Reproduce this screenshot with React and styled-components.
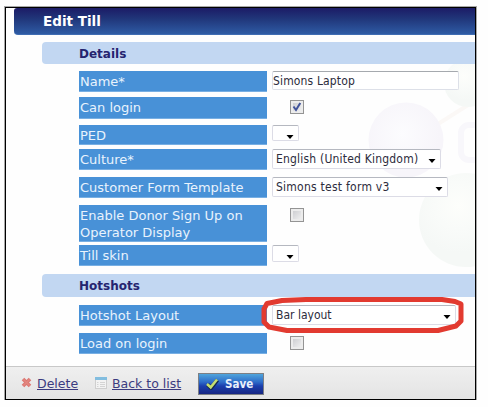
import styled, { createGlobalStyle } from "styled-components"

export default function App() {
  return (
    <>
      <GlobalStyle />
      <Window>
        <Molecules />
        <Title>Edit Till</Title>

        <Section $gap={7} $height={22}>Details</Section>
        <Fields>
          <Row $height={21} $gap={7}>
            <Label>Name*</Label>
            <TextInput defaultValue="Simons Laptop" />
          </Row>
          <Row $height={22} $gap={5}>
            <Label>Can login</Label>
            <Checkbox checked />
          </Row>
          <Row $height={20} $gap={6}>
            <Label>PED</Label>
            <Select $width={27} $height={16} $drop={7} />
          </Row>
          <Row $height={21} $gap={4}>
            <Label>Culture*</Label>
            <Select $width={169} $height={20} $spacing={0.2}>English (United Kingdom)</Select>
          </Row>
          <Row $height={21} $gap={7}>
            <Label>Customer Form Template</Label>
            <Select $width={176} $height={20} $spacing={0.25}>Simons test form v3</Select>
          </Row>
          <Row $height={37} $gap={7}>
            <Label>Enable Donor Sign Up on<br />Operator Display</Label>
            <Checkbox />
          </Row>
          <Row $height={21} $gap={3}>
            <Label>Till skin</Label>
            <Select $width={27} $height={17} $drop={6} />
          </Row>
        </Fields>

        <Section $gap={8} $height={23}>Hotshots</Section>
        <Fields>
          <Row $height={21} $gap={8}>
            <Label>Hotshot Layout</Label>
            <Select $width={184} $height={20}>Bar layout</Select>
            <Ring />
          </Row>
          <Row $height={21} $gap={7}>
            <Label>Load on login</Label>
            <Checkbox />
          </Row>
        </Fields>

        <Footer>
          <CrossIcon />
          <Link href="#" $width={42}>Delete</Link>
          <ListIcon />
          <Link href="#" $width={70}>Back to list</Link>
          <SaveButton>
            <TickIcon />
            Save
          </SaveButton>
        </Footer>
      </Window>
    </>
  )
}

function Select({ children, ...props }) {
  return (
    <SelectBox {...props}>
      <span>{children}</span>
      <svg width="8" height="4" viewBox="0 0 8 4">
        <path d="M0.500 0H7.500L4 4Z" fill="#000" />
      </svg>
    </SelectBox>
  )
}

function Checkbox({ checked }) {
  return (
    <CheckBox>
      {checked && (
        <svg width="10" height="10" viewBox="0 0 10 10">
          <path d="M1.5 4.5L4 8L8.3 1" fill="none" stroke="#42549b" strokeWidth="2" />
        </svg>
      )}
    </CheckBox>
  )
}

// faded molecule behind the form
function Molecules() {
  return (
    <Backdrop width="115" height="214" viewBox="360 58 115 214">
      <defs>
        <radialGradient id="violet" cx="45%" cy="42%">
          <stop offset="0" stopColor="#fcfcfe" />
          <stop offset="1" stopColor="#f7f5fa" />
        </radialGradient>
        <radialGradient id="green" cx="42%" cy="35%">
          <stop offset="0" stopColor="#fdfefb" />
          <stop offset="0.5" stopColor="#f9fbf9" />
          <stop offset="1" stopColor="#f5f8f6" />
        </radialGradient>
      </defs>
      <path d="M438 124L476 100" stroke="#fbf8f6" strokeWidth="4" />
      <circle cx="468" cy="83" r="24" fill="url(#green)" />
      <circle cx="406" cy="140" r="37.500" fill="url(#violet)" />
      <rect x="461" y="125" width="30" height="35" rx="8" fill="none" stroke="#f8f7fb" strokeWidth="6" />
      <circle cx="466" cy="220" r="47" fill="url(#green)" />
    </Backdrop>
  )
}

function Ring() {
  return (
    <RingSvg width="206" height="40" viewBox="260 295 206 40">
      <path
        d="M282 300.500L306 299.500H442L455 301.500L461 304V321L456 326L438 330.500H287L269 327L264 322V309L267 303.500Z"
        fill="none"
        stroke="#e23a30"
        strokeWidth="5"
        strokeLinejoin="round"
      />
    </RingSvg>
  )
}

function CrossIcon() {
  return (
    <svg width="11" height="11" viewBox="0 0 11 11">
      <path d="M2 2L9 9M9 2L2 9" stroke="#dc7670" strokeWidth="3.600" />
      <path d="M2.500 2.500L8.500 8.500M8.500 2.500L2.500 8.500" stroke="#e38780" strokeWidth="1.500" />
    </svg>
  )
}

function ListIcon() {
  return (
    <svg width="12" height="12" viewBox="0 0 12 12">
      <rect x="0.500" y="0.500" width="11" height="11" fill="#f3f3f3" stroke="#cfcfcf" />
      <rect width="12" height="3" fill="#82bddf" />
      <path d="M2 5.500H3.500M5 5.500H10M2 7.500H3.500M5 7.500H10M2 9.500H3.500M5 9.500H10" stroke="#d4d4d4" />
    </svg>
  )
}

function TickIcon() {
  return (
    <svg width="13" height="12" viewBox="0 0 13 12">
      <path d="M1.500 6.500L5 10L11.500 2" fill="none" stroke="#14264f" strokeWidth="4" />
      <path d="M1 6L4.700 9.300L11 1.500" fill="none" stroke="#c4df72" strokeWidth="2.600" />
    </svg>
  )
}

const GlobalStyle = createGlobalStyle`
  * {
    box-sizing: border-box;
  }
  body {
    margin: 0;
    background: #fefefe;
  }
`;

const Window = styled.div`
  position: relative;
  width: 471px;
  height: 393px;
  margin: 7px 0 0 5px;
  display: flex;
  flex-direction: column;
  border: 1px solid #000;
  box-shadow: 0 0 0 1px #a8a8a8;
  background: #fefefe;
  font-family: "DejaVu Sans", Verdana, sans-serif;
`;

const Backdrop = styled.svg`
  position: absolute;
  top: 50px;
  right: 0;
`;

const Title = styled.div`
  position: relative;
  flex: none;
  height: 27px;
  margin-left: 8px;
  padding-left: 29px;
  border-radius: 3px 0 0 4px;
  border-bottom: 1px solid #3f6cb2;
  background: linear-gradient(#1c1b66, #203579 40%, #2e5ba4);
  color: #fff;
  font-size: 13.5px;
  font-weight: bold;
  line-height: 26px;
`;

const Section = styled.div`
  position: relative;
  flex: none;
  height: ${props => props.$height}px;
  margin: ${props => props.$gap}px 0 0 36px;
  padding-left: 37px;
  border-radius: 4px 0 0 4px;
  background: #c2d7f2;
  color: #25246f;
  font-size: 12px;
  font-weight: bold;
  line-height: 24px;
`;

const Fields = styled.div`
  position: relative;
  padding-left: 73px;
`;

const Row = styled.div`
  position: relative;
  display: flex;
  align-items: flex-start;
  gap: 5px;
  height: ${props => props.$height}px;
  margin-top: ${props => props.$gap}px;
`;

const Label = styled.div`
  width: 188px;
  height: 100%;
  padding: 2px 0 0 1px;
  border: solid #78afe3;
  border-width: 0 0 1px;
  background: #4891d7;
  color: #e9f3fd;
  font-size: 13px;
  line-height: 17px;
  white-space: nowrap;
`;

const TextInput = styled.input`
  width: 187px;
  height: 19px;
  padding: 0;
  border: 1px solid #dde0e8;
  border-top-color: #a5a9ae;
  border-radius: 2px;
  background: #fff;
  color: #2c2c3c;
  font: 12px "DejaVu Sans Condensed", Tahoma, sans-serif;
  letter-spacing: 0.15px;
`;

const SelectBox = styled.div`
  display: flex;
  justify-content: space-between;
  align-items: center;
  width: ${props => props.$width}px;
  height: ${props => props.$height}px;
  padding: 0 4px 0 3px;
  border: 1px solid #dcdce6;
  border-top-color: #b5b8c0;
  border-radius: 2px;
  background: #fff;
  color: #2c2c3c;
  font: 12px "DejaVu Sans Condensed", Tahoma, sans-serif;
  letter-spacing: ${props => props.$spacing || 0}px;
  white-space: nowrap;
  svg {
    margin-top: ${props => props.$drop || 4}px;
  }
`;

const CheckBox = styled.div`
  display: grid;
  place-items: center;
  width: 14px;
  height: 14px;
  margin: 3px 0 0 18px;
  border: 1px solid #949494;
  background: linear-gradient(135deg, #c6c7cb, #f6f6f6);
  box-shadow: inset 0 0 0 2px #ececec;
`;

const RingSvg = styled.svg`
  position: absolute;
  top: -10px;
  left: 181px;
  z-index: 1;
`;

const Footer = styled.div`
  position: relative;
  display: flex;
  align-items: center;
  height: 33px;
  margin-top: auto;
  padding: 0 0 4px 15px;
  border-top: 1px solid #c8c8c8;
  background: linear-gradient(#efefef, #e4e4e4);
  > svg {
    margin-top: 3px;
  }
`;

const Link = styled.a`
  width: ${props => props.$width}px;
  margin: 4px 16px 0 5px;
  color: #3b3b80;
  font-size: 12.5px;
  white-space: nowrap;
`;

const SaveButton = styled.button`
  display: flex;
  align-items: center;
  gap: 6px;
  width: 66px;
  height: 22px;
  margin-top: 5px;
  padding: 0 0 0 7px;
  border: 1px solid #7c7f85;
  background: linear-gradient(#4fa5dc, #2e6cc9 40%, #1b3fae 60%, #172683);
  color: #e8effa;
  font: bold 11.5px "DejaVu Sans Condensed", Tahoma, sans-serif;
`;
